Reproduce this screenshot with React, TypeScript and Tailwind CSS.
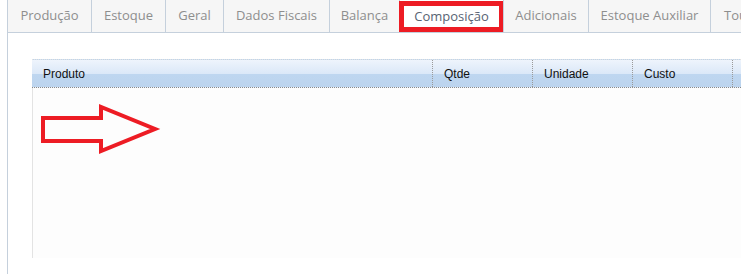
const tabs = [
  { label: "Produção", w: "w-[83px]" },
  { label: "Estoque", w: "w-[74px]" },
  { label: "Geral", w: "w-[58px]" },
  { label: "Dados Fiscais", w: "w-[106px]" },
  { label: "Balança", w: "w-[70px]" },
  { label: "Composição", w: "w-[104px]", active: true },
  { label: "Adicionais", w: "w-[85px]" },
  { label: "Estoque Auxiliar", w: "w-[122px]" },
  { label: "Tour", w: "w-[60px]" },
];

const columns = [
  { label: "Produto", w: "w-[401px]" },
  { label: "Qtde", w: "w-[100px]" },
  { label: "Unidade", w: "w-[100px]" },
  { label: "Custo", w: "w-[100px]" },
];

export default function App() {
  return (
    <div className="w-[741px] h-[274px] bg-white overflow-hidden font-['Open_Sans',sans-serif]">
      <div className="ml-[7px] h-full border-l border-[#c5d0dc] flex flex-col">
        {/* tabs */}
        <div className="flex h-[33px] shrink-0 bg-[#f6f6f6] border-b border-[#c5d0dc] overflow-hidden">
          {tabs.map((t, i) => (
            <div
              key={t.label}
              className={`${t.w} shrink-0 relative flex items-center justify-center text-[13px] whitespace-nowrap ${
                i > 0 ? "border-l border-[#c5d0dc]" : ""
              } ${t.active ? "bg-white text-[#576373] -mb-px" : "text-[#8e8e8e]"} ${
                t.label === "Tour" ? "justify-start pl-[13px]" : ""
              }`}
            >
              {t.label}
              {t.active && (
                <span className="absolute left-[-1px] right-[-1px] top-[1px] bottom-[1px] border-[5px] border-[#ed1c24]" />
              )}
            </div>
          ))}
        </div>

        {/* grid */}
        <div className="pt-[26px] pl-[24px]">
          <div className="relative">
            <div className="flex h-[29px] border-t border-[#e2e2e2] border-b border-dotted border-b-[#8a8a8a] bg-[linear-gradient(to_bottom,#eef4fc_0%,#dbe8f8_50%,#bed6f0_52%,#bcd4ee_100%)] font-['Liberation_Sans',Arial,sans-serif] text-[12px] text-[#111]">
              {columns.map((c) => (
                <div
                  key={c.label}
                  className={`${c.w} shrink-0 flex items-center pl-[11px] border-r border-dotted border-[#9a9a9a]`}
                >
                  {c.label}
                </div>
              ))}
            </div>
            <div className="h-[170px] bg-[#fdfdfd] border-l border-[#e3e3e3]" />

            <svg
              className="absolute left-0 top-0"
              width="200"
              height="130"
              viewBox="0 0 200 130"
            >
              <polygon
                points="11,59 69,59 69,48 123,70 69,92 69,82 11,82"
                fill="none"
                stroke="#ed1c24"
                strokeWidth="4"
                strokeLinejoin="miter"
              />
            </svg>
          </div>
        </div>
      </div>
    </div>
  );
}
